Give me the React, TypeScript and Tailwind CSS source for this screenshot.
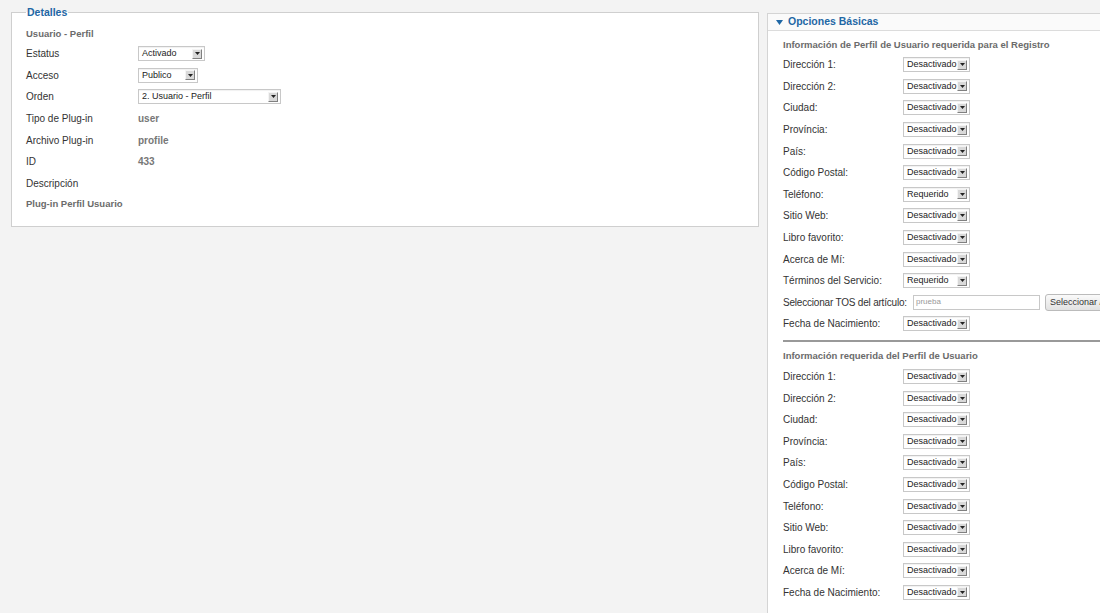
import React from 'react';

const font = { fontFamily: '"Liberation Sans", Arial, sans-serif' };

function FakeSelect({ value, width }: { value: string; width: number }) {
  return (
    <div
      className="flex h-[15px] items-center justify-between border border-[#c8c8c8] bg-white pl-[3px] pr-[2px] shadow-[inset_0_1px_1px_rgba(0,0,0,0.06)]"
      style={{ width }}
    >
      <span className="text-[9px] leading-none text-[#222]">{value}</span>
      <span className="flex h-[10px] w-[10px] items-center justify-center border border-t-[#f4f4f4] border-l-[#f4f4f4] border-r-[#808080] border-b-[#808080] bg-[#d9d9d9]">
        <svg width="5" height="3" viewBox="0 0 5 3">
          <path d="M0 0h5L2.5 3z" fill="#222" />
        </svg>
      </span>
    </div>
  );
}

const detalles: Array<{ label: string; value?: string; select?: { value: string; width: number } }> = [
  { label: 'Estatus', select: { value: 'Activado', width: 67 } },
  { label: 'Acceso', select: { value: 'Publico', width: 60 } },
  { label: 'Orden', select: { value: '2. Usuario - Perfil', width: 143 } },
  { label: 'Tipo de Plug-in', value: 'user' },
  { label: 'Archivo Plug-in', value: 'profile' },
  { label: 'ID', value: '433' },
  { label: 'Descripción' },
];

const registro: Array<[string, string]> = [
  ['Dirección 1:', 'Desactivado'],
  ['Dirección 2:', 'Desactivado'],
  ['Ciudad:', 'Desactivado'],
  ['Província:', 'Desactivado'],
  ['País:', 'Desactivado'],
  ['Código Postal:', 'Desactivado'],
  ['Teléfono:', 'Requerido'],
  ['Sitio Web:', 'Desactivado'],
  ['Libro favorito:', 'Desactivado'],
  ['Acerca de Mí:', 'Desactivado'],
  ['Términos del Servicio:', 'Requerido'],
];

const perfil: Array<[string, string]> = [
  ['Dirección 1:', 'Desactivado'],
  ['Dirección 2:', 'Desactivado'],
  ['Ciudad:', 'Desactivado'],
  ['Província:', 'Desactivado'],
  ['País:', 'Desactivado'],
  ['Código Postal:', 'Desactivado'],
  ['Teléfono:', 'Desactivado'],
  ['Sitio Web:', 'Desactivado'],
  ['Libro favorito:', 'Desactivado'],
  ['Acerca de Mí:', 'Desactivado'],
  ['Fecha de Nacimiento:', 'Desactivado'],
];

function OptionRow({ label, value }: { label: string; value: string }) {
  return (
    <div className="flex h-[21.6px] items-center">
      <span className="w-[120px] text-[10px] text-[#333]">{label}</span>
      <FakeSelect value={value} width={67} />
    </div>
  );
}

export default function App() {
  return (
    <div className="h-[613px] w-[1100px] overflow-hidden bg-[#f3f3f3]" style={font}>
      <div className="flex items-start gap-[8px] pl-[11px]">
        {/* Detalles */}
        <fieldset className="mt-[5px] h-[222px] w-[748px] shrink-0 border border-[#cfcfcf] bg-white pl-[14px] pt-[4px]">
          <legend className="px-[1px] text-[10.5px] font-bold leading-[14px] text-[#1f67a5]">Detalles</legend>
          <div className="flex h-[20px] items-center pt-[2px] text-[9.5px] font-bold text-[#6b6b6b]">Usuario - Perfil</div>
          {detalles.map((row) => (
            <div key={row.label} className="flex h-[21.6px] items-center">
              <span className="w-[112px] text-[10px] text-[#333]">{row.label}</span>
              {row.select && <FakeSelect value={row.select.value} width={row.select.width} />}
              {row.value && <span className="text-[10px] font-bold text-[#777]">{row.value}</span>}
            </div>
          ))}
          <div className="flex h-[19px] items-center text-[9.5px] font-bold text-[#6b6b6b]">Plug-in Perfil Usuario</div>
        </fieldset>

        {/* Opciones Básicas */}
        <div className="mt-[13px] w-[360px] shrink-0 border border-[#d4d4d4] bg-white">
          <div className="flex h-[17px] items-center gap-[5px] border-b border-[#dcdcdc] bg-[#fafafa] pl-[8px]">
            <svg width="7" height="5" viewBox="0 0 7 5">
              <path d="M0 0h7L3.5 5z" fill="#1f67a5" />
            </svg>
            <span className="text-[10.5px] font-bold text-[#1f67a5]">Opciones Básicas</span>
          </div>
          <div className="pl-[15px] pt-[5px]">
            <div className="flex h-[18px] items-center text-[9.5px] font-bold text-[#6b6b6b]">
              Información de Perfil de Usuario requerida para el Registro
            </div>
            {registro.map(([l, v]) => (
              <OptionRow key={l} label={l} value={v} />
            ))}
            <div className="flex h-[21.6px] items-center">
              <span className="w-[130px] shrink-0 whitespace-nowrap text-[10px] tracking-[-0.2px] text-[#333]">Seleccionar TOS del artículo:</span>
              <div className="flex h-[15px] w-[127px] shrink-0 items-center border border-[#c8c8c8] bg-white pl-[2px] text-[8px] text-[#999]">
                prueba
              </div>
              <button className="ml-[5px] h-[17px] shrink-0 whitespace-nowrap rounded-[3px] border border-[#bbb] bg-gradient-to-b from-[#fafafa] to-[#e2e2e2] px-[4px] text-[9px] text-[#333]">
                Seleccionar /
              </button>
            </div>
            <OptionRow label="Fecha de Nacimiento:" value="Desactivado" />
            <div className="mt-[5px] h-[2px] bg-[#999]" />
            <div className="flex h-[21px] items-center pt-[8px] text-[9.5px] font-bold text-[#6b6b6b]">
              Información requerida del Perfil de Usuario
            </div>
            <div className="pt-[3px]">
              {perfil.map(([l, v]) => (
                <OptionRow key={l} label={l} value={v} />
              ))}
            </div>
            <div className="h-[40px]" />
          </div>
        </div>
      </div>
    </div>
  );
}
